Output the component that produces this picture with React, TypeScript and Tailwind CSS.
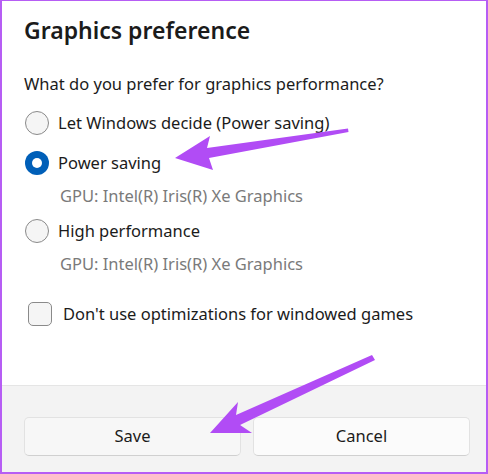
import React from "react"

const font = { fontFamily: '"Noto Sans", "Open Sans", sans-serif' }

function Radio({ checked }: { checked?: boolean }) {
  if (checked) {
    return (
      <span className="flex h-6 w-6 shrink-0 items-center justify-center rounded-full bg-[#005fb8]">
        <span className="h-[10px] w-[10px] rounded-full bg-white" />
      </span>
    )
  }
  return <span className="h-6 w-6 shrink-0 rounded-full border border-[#8a8a8a] bg-[#f5f5f5]" />
}

function Option({ label, gpu, checked }: { label: string; gpu?: string; checked?: boolean }) {
  return (
    <div className="flex flex-col">
      <div className="flex h-[40px] items-center gap-[9px] pl-[23px]">
        <Radio checked={checked} />
        <span className="text-[16.5px] text-[#1b1b1b]">{label}</span>
      </div>
      {gpu && <div className="pl-[58px] pb-[2px] text-[16.5px] leading-[26px] text-[#7a7a7a]">{gpu}</div>}
    </div>
  )
}

export default function App() {
  return (
    <div
      className="relative flex h-[474px] w-[488px] flex-col overflow-hidden border-l-2 border-r-2 border-t border-b-2 border-[#b65df4] bg-white"
      style={font}
    >
      <div className="flex-1 pt-[14px]">
        <h1 className="pl-[22px] text-[23px] font-semibold leading-[30px] text-[#1b1b1b]">Graphics preference</h1>
        <p className="mt-[27px] pl-[22px] text-[16.5px] leading-[24px] text-[#1b1b1b]">
          What do you prefer for graphics performance?
        </p>
        <div className="mt-[7px] flex flex-col">
          <Option label="Let Windows decide (Power saving)" />
          <Option label="Power saving" gpu="GPU: Intel(R) Iris(R) Xe Graphics" checked />
          <Option label="High performance" gpu="GPU: Intel(R) Iris(R) Xe Graphics" />
        </div>
        <div className="mt-[23px] flex h-[24px] items-center gap-[11px] pl-[26px]">
          <span className="h-[24px] w-[24px] shrink-0 rounded-[5px] border border-[#8a8a8a] bg-[#f5f5f5]" />
          <span className="text-[16.5px] text-[#1b1b1b]">Don't use optimizations for windowed games</span>
        </div>
      </div>
      <div className="flex h-[87px] gap-[12px] border-t border-[#e5e5e5] bg-[#f3f3f3] pl-[22px] pr-[16px] pt-[31px]">
        <button className="h-[39px] flex-1 rounded-[5px] border border-[#e2e2e2] border-b-[#d0d0d0] bg-[#f7f7f7] text-[16.5px] text-[#1b1b1b]">
          Save
        </button>
        <button className="h-[39px] flex-1 rounded-[5px] border border-[#e2e2e2] border-b-[#d0d0d0] bg-[#fbfbfb] text-[16.5px] text-[#1b1b1b]">
          Cancel
        </button>
      </div>
      <svg className="pointer-events-none absolute -left-[2px] -top-[1px]" width="488" height="474" viewBox="0 0 488 474">
        <polygon
          fill="#b14cf5"
          points="175,158 210,136 207,148 348,128.5 348.5,132 209,158 213,170"
        />
        <polygon
          fill="#b14cf5"
          points="210,433 238,402 236,415 372,355 375,360 240,425 252,433"
        />
      </svg>
    </div>
  )
}
